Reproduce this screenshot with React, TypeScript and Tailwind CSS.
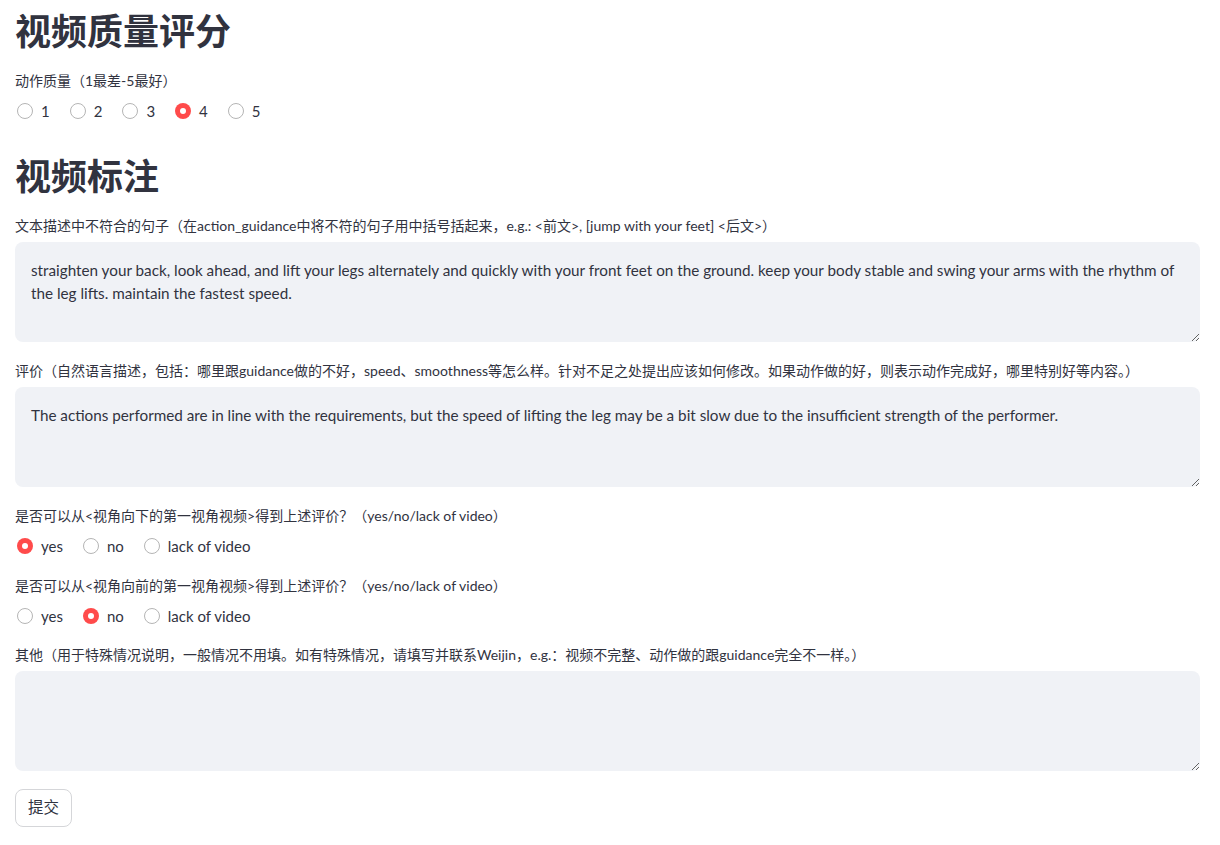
import { useState } from "react";

const font = {
  fontFamily: '"Lato", "Noto Sans CJK SC", sans-serif',
};

interface RadioGroupProps {
  options: string[];
  selected: string;
  gap: string;
}

const RadioGroup = ({ options, selected, gap }: RadioGroupProps) => {
  const [value, setValue] = useState(selected);
  return (
    <div className={`flex items-center ${gap} h-[24px] mt-[8px]`}>
      {options.map((opt) => (
        <label key={opt} className="flex items-center gap-2 cursor-pointer" onClick={() => setValue(opt)}>
          {value === opt ? (
            <span className="w-4 h-4 rounded-full bg-[#ff4b4b] flex items-center justify-center ml-[2px]">
              <span className="w-[6px] h-[6px] rounded-full bg-white" />
            </span>
          ) : (
            <span className="w-4 h-4 rounded-full border border-[#b5b5b5] bg-white ml-[2px]" />
          )}
          <span className="text-[15px] text-[#31333f]">{opt}</span>
        </label>
      ))}
    </div>
  );
};

const Field = ({ text }: { text?: string }) => (
  <textarea
    readOnly
    defaultValue={text}
    className="block w-full h-[100px] bg-[#f0f2f6] rounded-lg px-4 pt-[17px] text-[15.25px] leading-[23px] text-[#31333f] outline-none"
  />
);

const Label = ({ children }: { children: React.ReactNode }) => (
  <p className="text-[14px] text-[#31333f] leading-[20px] mb-[6px]">{children}</p>
);

export default function App() {
  return (
    <div style={font} className="pl-[15px] pr-[20px] pt-[8px] pb-6 text-[#31333f] bg-white min-h-[845px]">
      <h1 className="text-[36px] font-bold leading-[46px]">视频质量评分</h1>
      <div className="mt-[17px]">
        <Label>动作质量（1最差-5最好）</Label>
        <RadioGroup options={["1", "2", "3", "4", "5"]} selected="4" gap="gap-[18px]" />
      </div>

      <h1 className="text-[36px] font-bold leading-[46px] mt-[30px]">视频标注</h1>

      <div className="mt-[17px]">
        <Label>
          文本描述中不符合的句子（在action_guidance中将不符的句子用中括号括起来，e.g.: &lt;前文&gt;, [jump with your feet] &lt;后文&gt;）
        </Label>
        <Field text="straighten your back, look ahead, and lift your legs alternately and quickly with your front feet on the ground. keep your body stable and swing your arms with the rhythm of the leg lifts. maintain the fastest speed." />
      </div>

      <div className="mt-[19px]">
        <Label>
          评价（自然语言描述，包括：哪里跟guidance做的不好，speed、smoothness等怎么样。针对不足之处提出应该如何修改。如果动作做的好，则表示动作完成好，哪里特别好等内容。）
        </Label>
        <Field text="The actions performed are in line with the requirements, but the speed of lifting the leg may be a bit slow due to the insufficient strength of the performer." />
      </div>

      <div className="mt-[19px]">
        <Label>是否可以从&lt;视角向下的第一视角视频&gt;得到上述评价？（yes/no/lack of video）</Label>
        <RadioGroup options={["yes", "no", "lack of video"]} selected="yes" gap="gap-[18px]" />
      </div>

      <div className="mt-[18px]">
        <Label>是否可以从&lt;视角向前的第一视角视频&gt;得到上述评价？（yes/no/lack of video）</Label>
        <RadioGroup options={["yes", "no", "lack of video"]} selected="no" gap="gap-[18px]" />
      </div>

      <div className="mt-[17px]">
        <Label>其他（用于特殊情况说明，一般情况不用填。如有特殊情况，请填写并联系Weijin，e.g.：视频不完整、动作做的跟guidance完全不一样。）</Label>
        <Field />
      </div>

      <button className="mt-[18px] h-[38px] px-3 border border-[#d5d6d9] rounded-lg bg-white text-[15.5px] text-[#31333f]">
        提交
      </button>
    </div>
  );
}
